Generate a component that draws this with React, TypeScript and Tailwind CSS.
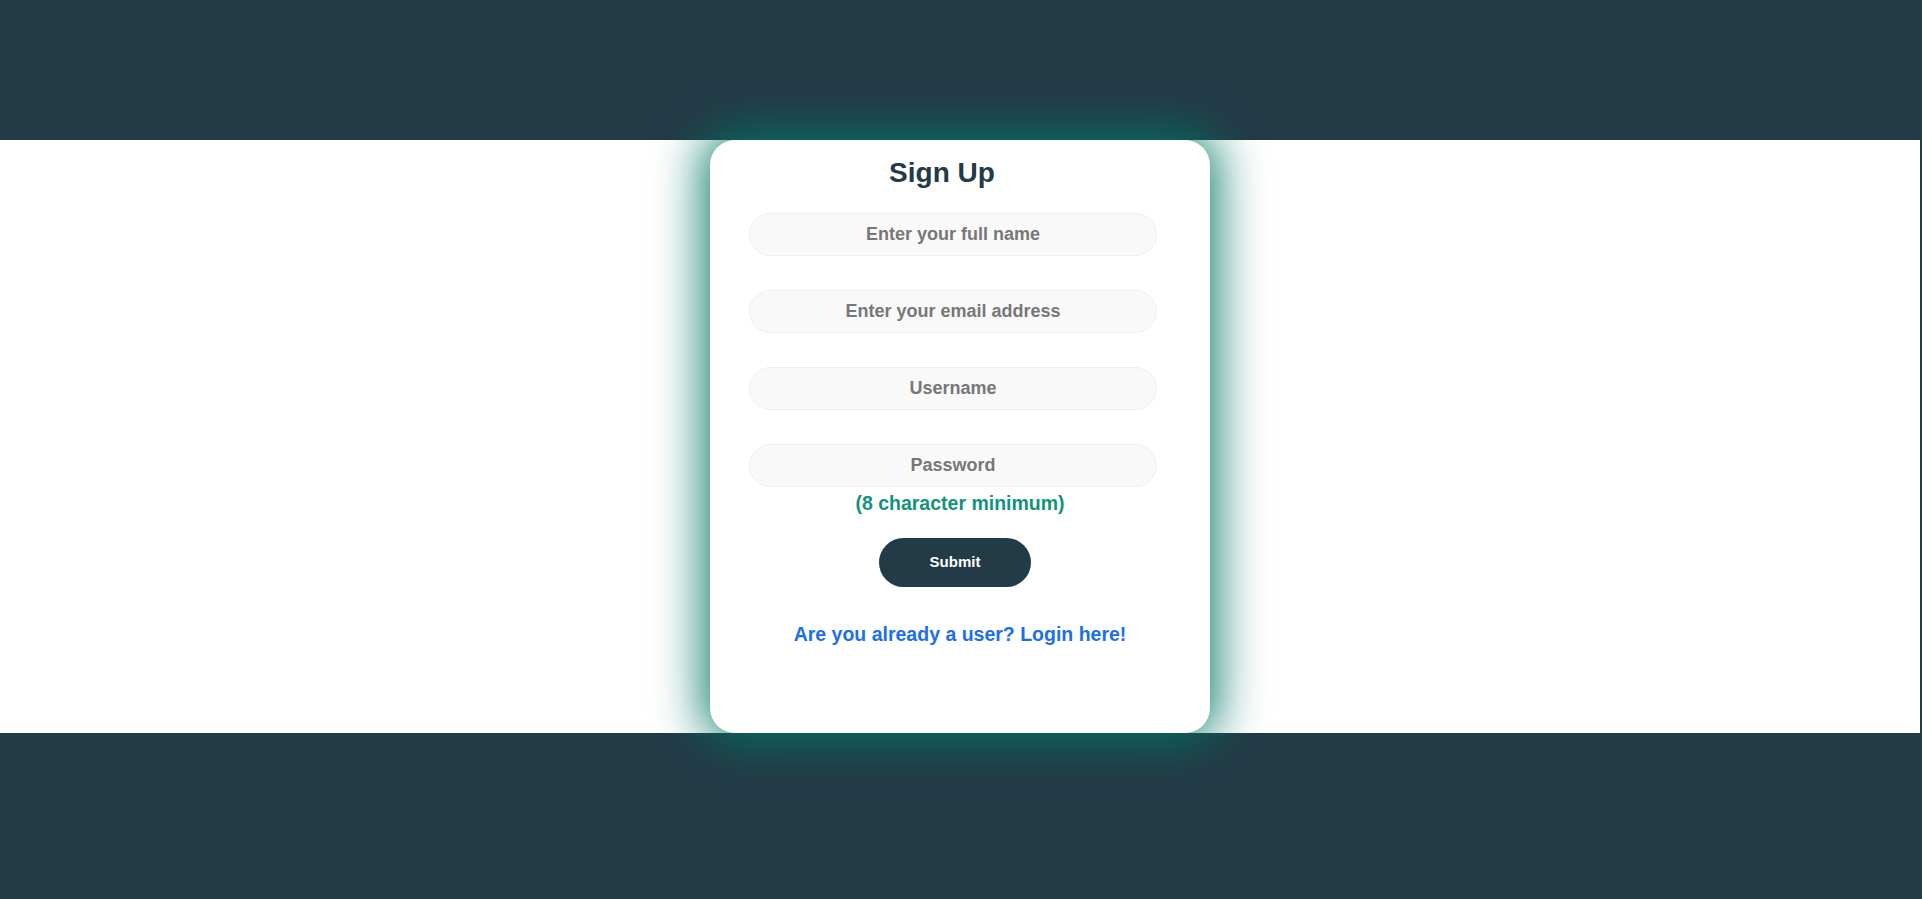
import { useState } from "react";

const fields = [
  { name: "fullName", placeholder: "Enter your full name", type: "text" },
  { name: "email", placeholder: "Enter your email address", type: "email" },
  { name: "username", placeholder: "Username", type: "text" },
  { name: "password", placeholder: "Password", type: "password" },
];

export default function App() {
  const [values, setValues] = useState<Record<string, string>>({});

  return (
    <div className="flex h-[899px] flex-col bg-[#233a47] pt-[140px] font-['Liberation_Sans',Arial,sans-serif]">
      {/* White band holding the card */}
      <div className="flex h-[593px] w-[1920px] justify-center bg-white">
        <form
          onSubmit={(e) => e.preventDefault()}
          className="flex h-full w-[500px] flex-col items-center rounded-[25px] bg-white pt-[17px] shadow-[0_0_48px_8px_rgba(0,118,100,0.9)]"
        >
          <h1 className="pr-[36px] text-[28px] font-bold leading-[32px] text-[#233a47]">Sign Up</h1>

          <div className="mt-[24px] flex flex-col gap-[34px] self-start pl-[39px]">
            {fields.map((f) => (
              <input
                key={f.name}
                type={f.type}
                placeholder={f.placeholder}
                value={values[f.name] ?? ""}
                onChange={(e) => setValues({ ...values, [f.name]: e.target.value })}
                className="h-[43px] w-[408px] rounded-full border border-[#efefef] bg-[#f9f9f9] text-center text-[18px] font-bold text-[#555] outline-none placeholder:text-[#777]"
              />
            ))}
          </div>

          <p className="mt-[4px] text-[19.5px] font-bold leading-[24px] text-[#13917b]">(8 character minimum)</p>

          <button
            type="submit"
            className="mt-[23px] ml-[169px] h-[49px] w-[152px] self-start rounded-full bg-[#233a47] text-[15px] font-bold text-white"
          >
            Submit
          </button>

          <a href="#" className="mt-[35px] text-[19.5px] font-bold leading-[24px] text-[#1b6fe8]">
            Are you already a user? Login here!
          </a>
        </form>
      </div>
    </div>
  );
}
